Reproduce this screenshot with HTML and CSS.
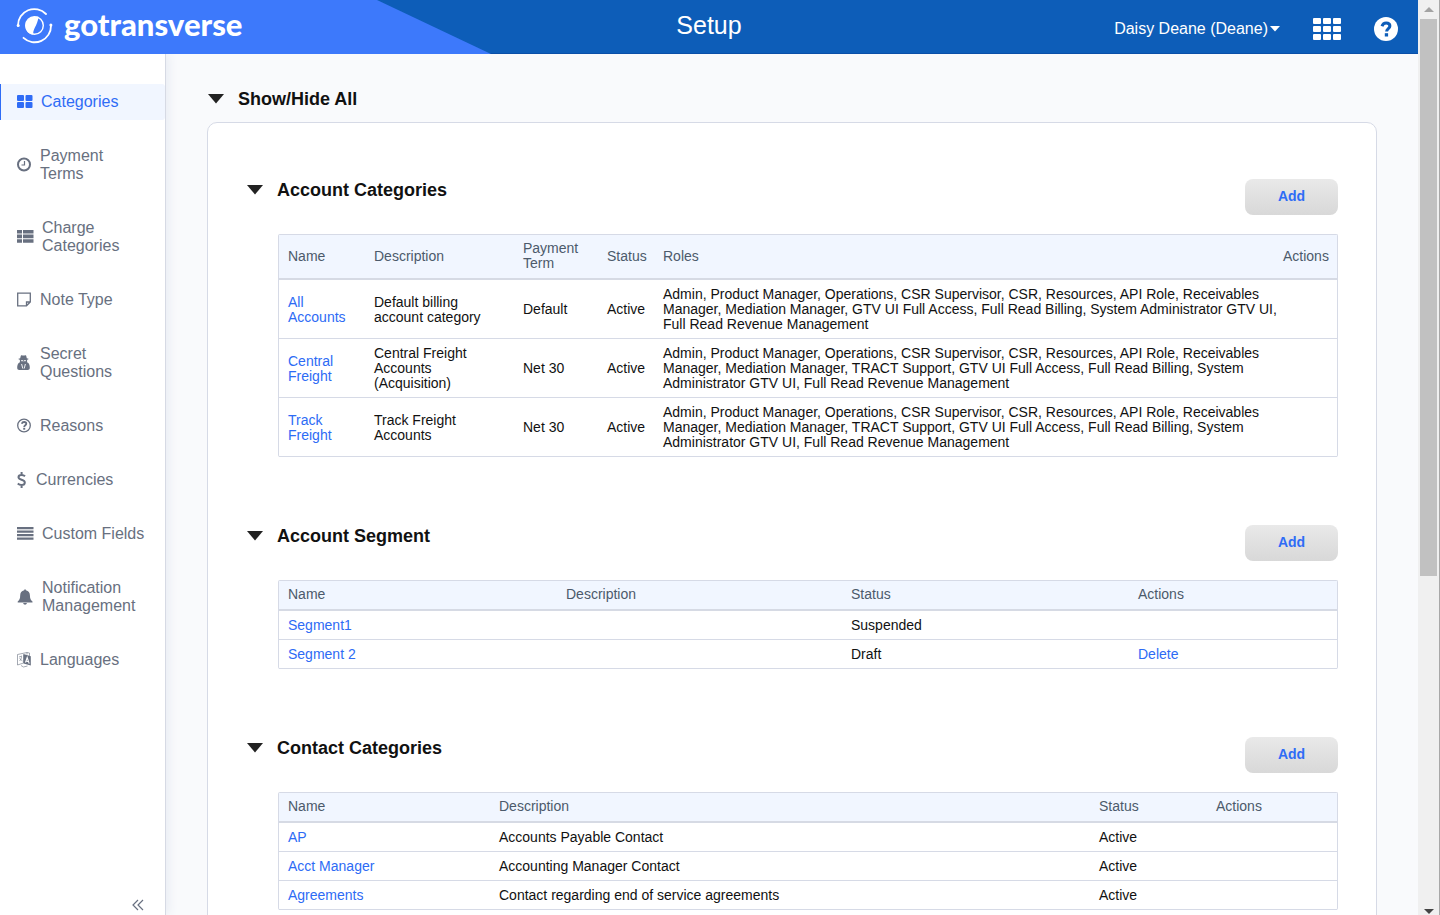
FILE: index.html
```html
<!DOCTYPE html>
<html lang="en">
<head>
<meta charset="utf-8">
<title>Setup - gotransverse</title>
<link rel="stylesheet" href="styles.css">
</head>
<body>
<div class="window">
<div class="app">
  <header class="topbar">
    <a class="brand" href="#" aria-label="gotransverse">
      <svg class="brand-mark" width="37" height="36" viewBox="0 0 37 36" aria-hidden="true">
        <g fill="none" stroke="#fff" stroke-width="1.800" stroke-linecap="round">
          <path d="M2 17.500A16.300 16.300 0 0 1 30 6"/>
          <path d="M35 17.500A16.300 16.300 0 0 1 7.500 29.800"/>
          <circle cx="18.500" cy="17.500" r="8.800" stroke-width="1.400"/>
        </g>
        <circle cx="2.200" cy="17.500" r="1.500" fill="#fff"/><circle cx="34.900" cy="17" r="1.500" fill="#fff"/>
        <path d="M22.500 8.800C15 7.500 9.500 12 9.500 17.800c0 5 3.500 8.700 8 8.900-1.500-4.500 4-9 5-17.900z" fill="#fff"/>
      </svg>
      <span class="brand-name">gotransverse</span>
    </a>
    <h1 class="page-title">Setup</h1>
    <div class="tools">
      <button class="user" type="button">Daisy Deane (Deane)<svg width="10" height="6" viewBox="0 0 10 6" aria-hidden="true"><path d="M0 0h10L5 5.500z" fill="#fff"/></svg></button>
      <button class="tool" type="button" aria-label="Applications"><svg width="28" height="22" viewBox="0 0 28 22" fill="#fff"><rect width="8" height="6" rx="1"/><rect x="10" width="8" height="6" rx="1"/><rect x="20" width="8" height="6" rx="1"/><rect y="8" width="8" height="6" rx="1"/><rect x="10" y="8" width="8" height="6" rx="1"/><rect x="20" y="8" width="8" height="6" rx="1"/><rect y="16" width="8" height="6" rx="1"/><rect x="10" y="16" width="8" height="6" rx="1"/><rect x="20" y="16" width="8" height="6" rx="1"/></svg></button>
      <button class="tool" type="button" aria-label="Help"><svg width="24" height="24" viewBox="0 0 24 24"><circle cx="12" cy="12" r="12" fill="#fff"/><path d="M8 9.200C8.700 7 10.200 6 12.200 6c2.100 0 3.700 1.200 3.700 3.100 0 2.600-3.300 2.500-3.300 5.400" fill="none" stroke="#0d5db8" stroke-width="3"/><rect x="10.800" y="16.200" width="3.300" height="3.300" fill="#0d5db8"/></svg></button>
    </div>
  </header>
  <div class="body">
    <nav class="sidebar" aria-label="Setup sections">
      <a class="item active" href="#"><svg width="16" height="14" viewBox="0 0 16 14"><rect x="0" y="0" width="7" height="6" rx="1"/><rect x="8.500" y="0" width="7" height="6" rx="1"/><rect x="0" y="7" width="7" height="6" rx="1"/><rect x="8.500" y="7" width="7" height="6" rx="1"/></svg><span>Categories</span></a>
      <a class="item" href="#"><svg width="15" height="16" viewBox="0 0 15 16"><g fill="none" stroke="currentColor"><circle cx="7" cy="7.500" r="6" stroke-width="2"/><path d="M7.500 4V8H4.500" stroke-width="1.200"/></g></svg><span>Payment Terms</span></a>
      <a class="item" href="#"><svg width="17" height="16" viewBox="0 0 17 16"><path d="M0 1h5v3.600H0zM6 1h10.500v3.600H6zM0 5.600h5v3.600H0zM6 5.600h10.500v3.600H6zM0 10.200h5v3.600H0zM6 10.200h10.500v3.600H6z"/></svg><span>Charge Categories</span></a>
      <a class="item" href="#"><svg width="15" height="16" viewBox="0 0 15 16"><path d="M.7 1.200h12.600v8.800l-3.800 3.800H.7zM13.300 10H9.500v3.800" fill="none" stroke="currentColor" stroke-width="1.300"/></svg><span>Note Type</span></a>
      <a class="item" href="#"><svg width="15" height="16" viewBox="0 0 15 16"><path d="M3.800.8C4.600-.2 5.400.6 6.500.6S8.400-.2 9.200.8L9.800 3.200c2.200.3 2.200 1.300.3 1.600V7.300l1.200.7c1.200 1 1.500 3 1.500 5 0 1.300-.8 2-2 2H2.200c-1.200 0-2-.7-2-2 0-2 .3-4 1.500-5l1.200-.7V4.800c-1.900-.3-1.900-1.300.3-1.600z"/><path d="M4 5.700h2l.5.500.5-.500h2M4.600 9l1.200 4.500M8.400 9l-1.200 4.500" fill="none" stroke="#fff" stroke-width=".9"/></svg><span>Secret Questions</span></a>
      <a class="item" href="#"><svg width="15" height="16" viewBox="0 0 15 16"><circle cx="7" cy="7.500" r="6.300" fill="none" stroke="currentColor" stroke-width="1.300"/><path d="M4.700 5.700C5.200 4.400 6 4 7.100 4c1.300 0 2.200.7 2.200 1.700 0 1.600-2.100 1.500-2.100 3.200" fill="none" stroke="currentColor" stroke-width="1.800"/><path d="M6.200 9.800h2v1.900h-2z"/></svg><span>Reasons</span></a>
      <a class="item" href="#"><svg width="11" height="16" viewBox="0 0 11 16"><path d="M8 4.300C7 3.300 6 3 4.600 3 2.800 3 1.500 3.900 1.500 5.300c0 3 6.300 2 6.300 5.200 0 1.500-1.400 2.500-3.300 2.500-1.600 0-2.700-.5-3.700-1.500M4.600 0v3M4.600 13v3" fill="none" stroke="currentColor" stroke-width="2"/></svg><span>Currencies</span></a>
      <a class="item" href="#"><svg width="17" height="16" viewBox="0 0 17 16"><path d="M0 1h16.500v2.200H0zM0 4.500h16.500v2.200H0zM0 8h16.500v2.200H0zM0 11.500h16.500v2.200H0z"/></svg><span>Custom Fields</span></a>
      <a class="item" href="#"><svg width="17" height="16" viewBox="0 0 17 16"><path d="M7.200 1.200c0-1.200 1.700-1.200 1.700 0 2.700.5 4 2.500 4 5 0 3.700 1 5 2.600 6.300v1H.7v-1C2.200 11.200 3.200 10 3.200 6.200c0-2.500 1.300-4.500 4-5zM6.200 14h3.700c-.2 2.300-3.500 2.300-3.700 0z"/></svg><span>Notification Management</span></a>
      <a class="item" href="#"><svg width="15" height="16" viewBox="0 0 15 16"><path d="M6.500 2L13.800 4.200V13.500L6.500 11.500z"/><path d="M8.500 10.500l1.700-5 2 6.200M9 9l2.500.7" fill="none" stroke="#fff" stroke-width="1.100"/><path d="M.5 2.500L10 .5v2M.5 2.500v10.500l6-2V2.500M2 5l3-1M2.500 9c1-1 2-2.500 2-4.500M2.500 6.500l3 2.500M4 13.500l2.500 1.500 4-1M10 .5l2.500.5v3" fill="none" stroke="currentColor" stroke-width=".6"/></svg><span>Languages</span></a>
      <button class="collapse" type="button" aria-label="Collapse menu"><svg width="12" height="12" viewBox="0 0 12 12"><path d="M6 1L1 6l5 5M11 1L6 6l5 5" fill="none" stroke="currentColor" stroke-width="1.200"/></svg></button>
    </nav>
    <main class="content">
      <h2 class="toggle-all"><button class="toggle" type="button"><svg width="16" height="10" viewBox="0 0 16 10" aria-hidden="true"><path d="M0 0h16L8 9.500z"/></svg>Show/Hide All</button></h2>
      <div class="card">
        <section>
          <div class="section-head"><h3><button class="toggle" type="button"><svg width="16" height="10" viewBox="0 0 16 10" aria-hidden="true"><path d="M0 0h16L8 9.500z"/></svg>Account Categories</button></h3><button class="add" type="button">Add</button></div>
          <table class="grid roles">
            <colgroup><col class="w-86"><col class="w-149"><col class="w-84"><col class="w-56"><col><col class="w-60"></colgroup>
            <thead><tr><th>Name</th><th>Description</th><th>Payment Term</th><th>Status</th><th>Roles</th><th>Actions</th></tr></thead>
            <tbody>
              <tr><td><a href="#">All Accounts</a></td><td>Default billing account category</td><td>Default</td><td>Active</td><td>Admin, Product Manager, Operations, CSR Supervisor, CSR, Resources, API Role, Receivables Manager, Mediation Manager, GTV UI Full Access, Full Read Billing, System Administrator GTV UI, Full Read Revenue Management</td><td></td></tr>
              <tr><td><a href="#">Central Freight</a></td><td>Central Freight Accounts (Acquisition)</td><td>Net 30</td><td>Active</td><td>Admin, Product Manager, Operations, CSR Supervisor, CSR, Resources, API Role, Receivables Manager, Mediation Manager, TRACT Support, GTV UI Full Access, Full Read Billing, System Administrator GTV UI, Full Read Revenue Management</td><td></td></tr>
              <tr><td><a href="#">Track Freight</a></td><td>Track Freight Accounts</td><td>Net 30</td><td>Active</td><td>Admin, Product Manager, Operations, CSR Supervisor, CSR, Resources, API Role, Receivables Manager, Mediation Manager, TRACT Support, GTV UI Full Access, Full Read Billing, System Administrator GTV UI, Full Read Revenue Management</td><td></td></tr>
            </tbody>
          </table>
        </section>
        <section>
          <div class="section-head"><h3><button class="toggle" type="button"><svg width="16" height="10" viewBox="0 0 16 10" aria-hidden="true"><path d="M0 0h16L8 9.500z"/></svg>Account Segment</button></h3><button class="add" type="button">Add</button></div>
          <table class="grid">
            <colgroup><col class="w-278"><col><col class="w-287"><col class="w-208"></colgroup>
            <thead><tr><th>Name</th><th>Description</th><th>Status</th><th>Actions</th></tr></thead>
            <tbody>
              <tr><td><a href="#">Segment1</a></td><td></td><td>Suspended</td><td></td></tr>
              <tr><td><a href="#">Segment 2</a></td><td></td><td>Draft</td><td><a href="#">Delete</a></td></tr>
            </tbody>
          </table>
        </section>
        <section>
          <div class="section-head"><h3><button class="toggle" type="button"><svg width="16" height="10" viewBox="0 0 16 10" aria-hidden="true"><path d="M0 0h16L8 9.500z"/></svg>Contact Categories</button></h3><button class="add" type="button">Add</button></div>
          <table class="grid">
            <colgroup><col class="w-211"><col><col class="w-117"><col class="w-130"></colgroup>
            <thead><tr><th>Name</th><th>Description</th><th>Status</th><th>Actions</th></tr></thead>
            <tbody>
              <tr><td><a href="#">AP</a></td><td>Accounts Payable Contact</td><td>Active</td><td></td></tr>
              <tr><td><a href="#">Acct Manager</a></td><td>Accounting Manager Contact</td><td>Active</td><td></td></tr>
              <tr><td><a href="#">Agreements</a></td><td>Contact regarding end of service agreements</td><td>Active</td><td></td></tr>
            </tbody>
          </table>
        </section>
      </div>
    </main>
  </div>
</div>
<div class="scrollbar" aria-hidden="true">
  <svg width="18" height="19" viewBox="0 0 18 19"><path d="M4 12l5-5 5 5z" fill="#a3a3a3"/></svg>
  <div class="track"><div class="thumb"></div></div>
  <svg width="18" height="12" viewBox="0 0 18 12"><path d="M4 6h10l-5 5z" fill="#444"/></svg>
</div>
</div>
</body>
</html>
```
FILE: styles.css
```css
* { box-sizing: border-box; }
body { margin: 0; font: 14px/15px "Liberation Sans", Arial, sans-serif; color: #111; background: #f9fafc; }
a { color: #2d6bf5; text-decoration: none; }
button { font: inherit; color: inherit; background: none; border: 0; padding: 0; cursor: pointer; }
h1, h2, h3 { margin: 0; }
svg { display: block; flex: none; }

.window { display: flex; height: 100vh; overflow: hidden; }
.app { flex: 1; min-width: 0; display: flex; flex-direction: column; }

.topbar { flex: none; position: relative; z-index: 2; height: 54px; display: grid; grid-template-columns: 1fr auto 1fr; background: #0d5db8; color: #fff; box-shadow: inset 0 -1px #0a4fa8; }
.brand { width: 491px; height: 54px; padding: 8px 0 0 16px; display: flex; align-items: flex-start; gap: 11px; background: #3d79fb; color: #fff; clip-path: polygon(0 0, 377px 0, 100% 100%, 0 100%); }
.brand-name { font: 900 31px/32px Lato, sans-serif; }
.page-title { padding-top: 10px; font-size: 25px; line-height: 30px; font-weight: 400; }
.tools { display: flex; align-items: center; justify-content: flex-end; padding: 4px 20px 0 0; }
.user { display: flex; align-items: center; gap: 2px; font-size: 16px; line-height: 20px; }
.tool { margin-left: 33px; }

.body { flex: 1; min-height: 0; display: flex; }
.sidebar { flex: none; width: 166px; display: flex; flex-direction: column; gap: 18px; padding-top: 30px; background: #fff; border-right: 1px solid #d6dae4; box-shadow: 2px 0 10px #e6eaf2; z-index: 1; }
.item { display: flex; align-items: center; gap: 8px; padding: 9px 18px 9px 16px; border-left: 1px solid transparent; font-size: 16px; line-height: 18px; color: #687080; fill: currentColor; }
.item.active { color: #2f6cf6; background: #f1f6ff; border-color: #2f6cf6; border-radius: 0 3px 3px 0; }
.collapse { margin: auto 21px 4px auto; color: #687080; }

.content { flex: 1; min-width: 0; padding: 35px 41px 0; overflow: hidden; }
.toggle-all { margin-bottom: 12px; padding-left: 1px; font-size: 18px; line-height: 21px; }
.toggle { display: flex; align-items: center; gap: 14px; font-weight: 700; font-size: 18px; line-height: 21px; fill: #222; }
.toggle svg { margin-bottom: 2px; }
.card { padding: 56px 38px 0 39px; background: #fff; border: 1px solid #d6dae6; border-radius: 10px; min-height: 900px; }
section { margin-bottom: 68px; }
.section-head { display: flex; justify-content: space-between; align-items: flex-start; margin-bottom: 19px; }
.section-head h3 { padding-top: 1px; }
.add { width: 93px; height: 36px; border-radius: 8px; background: linear-gradient(#e9e9e9, #d8d8d8); color: #2f6cf6; font-weight: 700; padding-bottom: 2px; }

.grid { width: calc(100% - 31px); margin-left: 31px; table-layout: fixed; border-collapse: separate; border-spacing: 0; border: 1px solid #d6dae6; border-bottom: 0; border-radius: 2px; }
.grid th, .grid td { padding: 7px 9px 6px; text-align: left; vertical-align: middle; border-bottom: 1px solid #d6dae6; }
.grid th { padding: 6px 9px 7px; font-weight: 400; color: #4c5a6b; background: #f1f6ff; border-bottom: 2px solid #d6dae4; }
.roles td:nth-child(5) { padding-right: 0; }
.roles th:last-child { padding-left: 6px; }
.w-56 { width: 56px; }
.w-60 { width: 60px; }
.w-84 { width: 84px; }
.w-86 { width: 86px; }
.w-117 { width: 117px; }
.w-130 { width: 130px; }
.w-149 { width: 149px; }
.w-208 { width: 208px; }
.w-211 { width: 211px; }
.w-278 { width: 278px; }
.w-287 { width: 287px; }

.scrollbar { flex: none; width: 22px; padding: 0 2px; display: flex; flex-direction: column; background: #f0f0f0; border-right: 1px solid #a8a8a8; }
.track { flex: 1; }
.thumb { height: 63%; width: 17px; background: #c1c1c1; }
```
